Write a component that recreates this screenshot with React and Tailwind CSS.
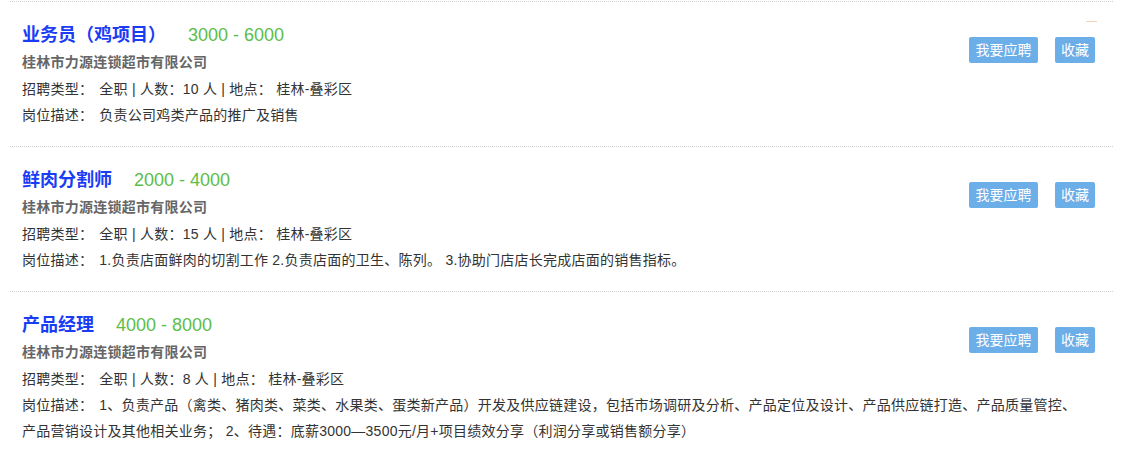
const JOBS = [
  {
    id: 1,
    titulo: '业务员（鸡项目）',
    salario: '3000 - 6000',
    empresa: '桂林市力源连锁超市有限公司',
    tipo: '全职',
    personas: 10,
    lugar: '桂林-叠彩区',
    descripcion: '负责公司鸡类产品的推广及销售',
  },
  {
    id: 2,
    titulo: '鲜肉分割师',
    salario: '2000 - 4000',
    empresa: '桂林市力源连锁超市有限公司',
    tipo: '全职',
    personas: 15,
    lugar: '桂林-叠彩区',
    descripcion: '1.负责店面鲜肉的切割工作 2.负责店面的卫生、陈列。 3.协助门店店长完成店面的销售指标。',
  },
  {
    id: 3,
    titulo: '产品经理',
    salario: '4000 - 8000',
    empresa: '桂林市力源连锁超市有限公司',
    tipo: '全职',
    personas: 8,
    lugar: '桂林-叠彩区',
    descripcion:
      '1、负责产品（禽类、猪肉类、菜类、水果类、蛋类新产品）开发及供应链建设，包括市场调研及分析、产品定位及设计、产品供应链打造、产品质量管控、产品营销设计及其他相关业务； 2、待遇：底薪3000—3500元/月+项目绩效分享（利润分享或销售额分享）',
  },
]

function JobItem({ job }) {
  return (
    <div className="border-t border-dotted border-[#cfcfcf] pl-3 pr-[30px] pt-[19px] pb-[18px]">
      <div className="float-right mt-4 -mr-3 flex gap-[17px]">
        <button
          type="button"
          className="h-[26px] w-[69px] rounded-[2px] bg-[#6caee8] text-[14px] leading-[26px] text-white"
        >
          我要应聘
        </button>
        <button
          type="button"
          className="h-[26px] w-10 rounded-[2px] bg-[#6caee8] text-[14px] leading-[26px] text-white"
        >
          收藏
        </button>
      </div>
      <div className="flex items-center text-[18px] leading-[28px]">
        <span className="font-bold text-[#1a3cf5]">{job.titulo}</span>
        <span className="ml-[22px] text-[#5cbd4a]">{job.salario}</span>
      </div>
      <div className="text-[14px] leading-[27px] tracking-[0.25px] text-[#666] font-bold">
        {job.empresa}
      </div>
      <div className="text-[14px] leading-[26px] tracking-[0.25px] text-[#333]">
        招聘类型：
        <span className="ml-[6px]">
          {job.tipo} | 人数：{job.personas} 人 | 地点：&nbsp;{job.lugar}
        </span>
      </div>
      <div className="text-[14px] leading-[26px] tracking-[0.25px] text-[#333]">
        岗位描述：<span className="ml-[6px]">{job.descripcion}</span>
      </div>
    </div>
  )
}

export default function App() {
  return (
    <div
      className="relative h-[452px] w-[1123px] overflow-hidden bg-white pt-px"
      style={{ fontFamily: '"Liberation Sans", "Noto Sans CJK SC", sans-serif' }}
    >
      <span className="absolute left-[1086px] top-[21px] h-px w-[11px] bg-[#f3d2ad]" />
      <div className="mx-[10px]">
        {JOBS.map((job) => (
          <JobItem key={job.id} job={job} />
        ))}
      </div>
    </div>
  )
}
